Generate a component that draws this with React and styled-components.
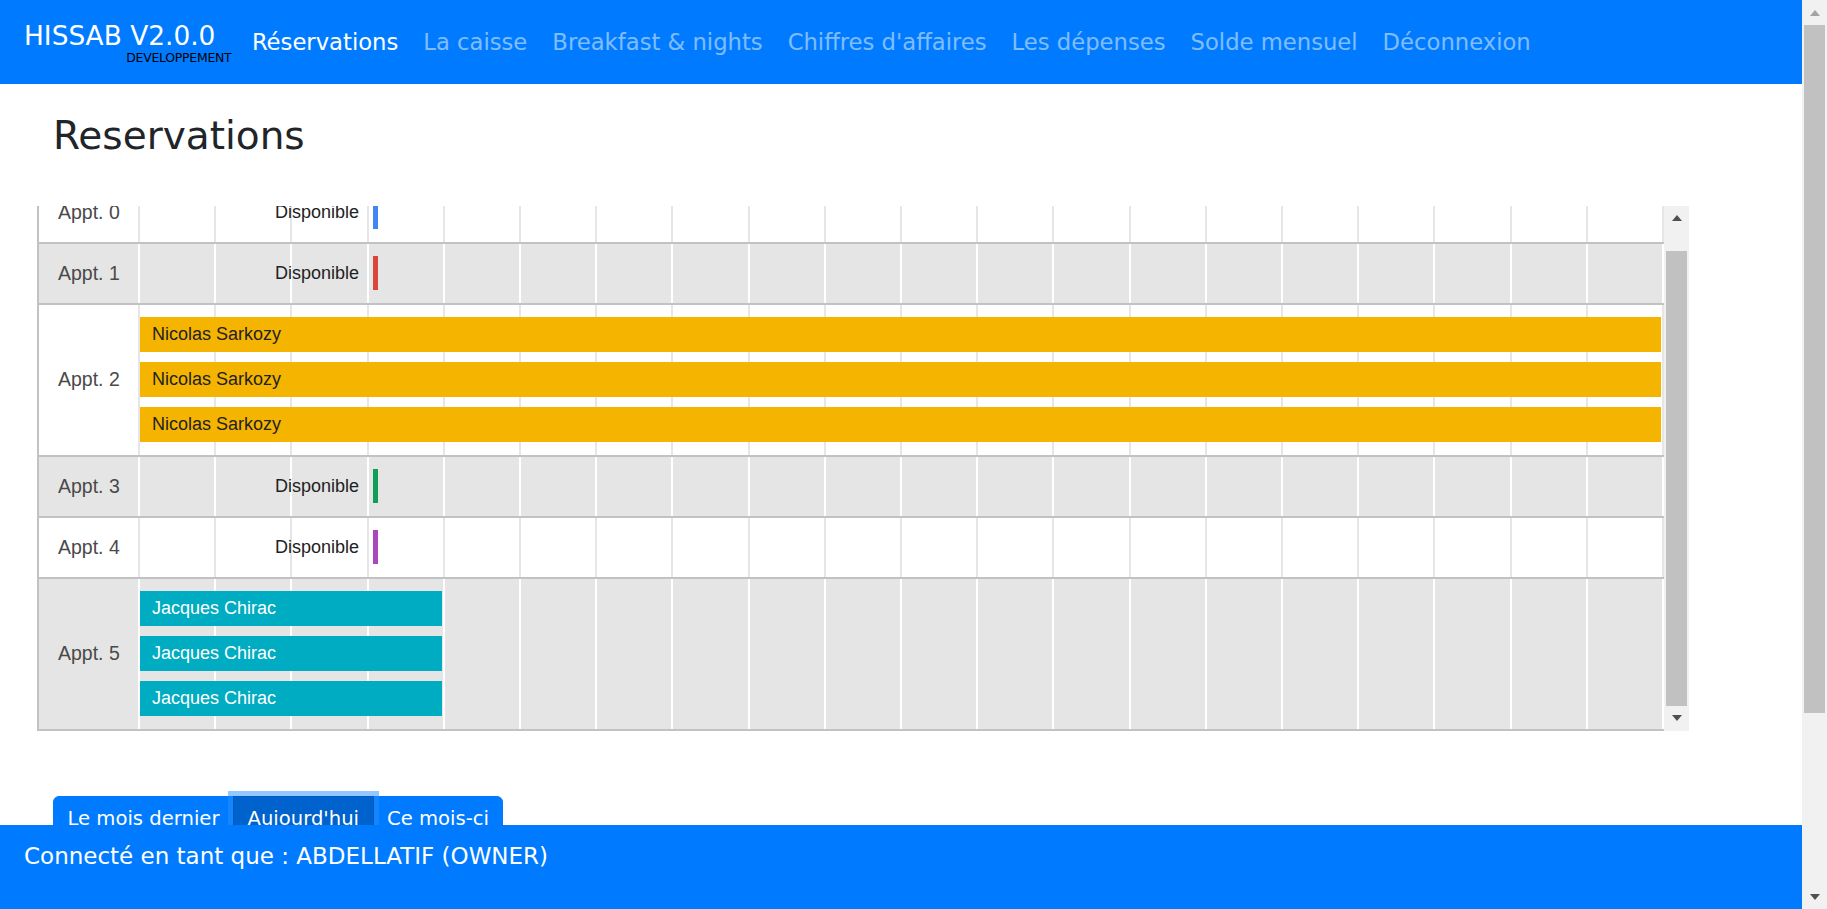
import React, { useEffect, useRef } from "react";
import styled, { createGlobalStyle } from "styled-components";

const COL = 76.2;
const CHART_HEIGHT = 525;
const ROW_HEIGHT = 61;
const STACK_HEIGHT = 152;
const PAGE_HEIGHT = 1135;

const GlobalStyle = createGlobalStyle`
  html, body {
    margin: 0;
    padding: 0;
    overflow: hidden;
  }
  body {
    font-family: "DejaVu Sans", "Open Sans", sans-serif;
    color: #212529;
    background: #ffffff;
  }
`;

/* ---------- scrollbars (drawn, the browser hides its own) ---------- */

const Rail = styled.div`
  width: 25px;
  flex: none;
  display: flex;
  flex-direction: column;
  background: #f1f1f1;
  height: ${(p) => p.$height};
`;

const RailButton = styled.div`
  height: 25px;
  flex: none;
  display: flex;
  align-items: center;
  justify-content: center;

  &::before {
    content: "";
    width: 0;
    height: 0;
    border-left: 5.5px solid transparent;
    border-right: 5.5px solid transparent;
    ${(p) =>
      p.$down
        ? `border-top: 6px solid ${p.$color};`
        : `border-bottom: 6px solid ${p.$color};`}
  }
`;

const RailTrack = styled.div`
  flex: 1;
  padding: 0 2px;
  overflow: hidden;
`;

const RailThumb = styled.div`
  background: #c1c1c1;
`;

function ScrollBar({ height, visible, content, offset, upColor, downColor }) {
  const track = (typeof height === "number" ? height : 909) - 50;
  const size = (track * visible) / content;
  const top = (track * offset) / content;
  return (
    <Rail $height={typeof height === "number" ? `${height}px` : height}>
      <RailButton $color={upColor} />
      <RailTrack>
        <RailThumb style={{ height: size, marginTop: top }} />
      </RailTrack>
      <RailButton $down $color={downColor} />
    </Rail>
  );
}

/* ---------- page frame ---------- */

const Screen = styled.div`
  display: flex;
  height: 100vh;
  overflow: hidden;
`;

const Viewport = styled.div`
  flex: 1;
  min-width: 0;
  display: flex;
  flex-direction: column;
`;

const Navbar = styled.nav`
  height: 84px;
  flex: none;
  background: #007bff;
  display: flex;
  align-items: center;
  padding: 0 24px;
`;

const Brand = styled.div`
  display: flex;
  flex-direction: column;
  align-items: flex-end;
  padding: 13px 0;
  margin-right: 24px;
  color: #ffffff;
`;

const BrandName = styled.span`
  font-size: 26.4px;
  line-height: 32px;
  white-space: nowrap;
`;

const BrandTag = styled.small`
  font-size: 12.5px;
  line-height: 14px;
  letter-spacing: -0.3px;
  color: #000000;
  margin: -1px -16px 0 0;
`;

const NavLinks = styled.div`
  display: flex;
  align-items: center;
`;

const NavLink = styled.a`
  font-size: 22.7px;
  line-height: 33px;
  padding: 0 12.5px;
  white-space: nowrap;
  text-decoration: none;
  color: ${(p) => (p.$active ? "#ffffff" : "rgba(255, 255, 255, 0.5)")};
`;

const Main = styled.main`
  flex: 1;
  min-height: 0;
  overflow: hidden;
  padding: 0 37px;
`;

const Title = styled.h1`
  margin: 29px 0 46px 16px;
  font-size: 39px;
  line-height: 1.2;
  font-weight: 400;
  color: #212529;
`;

/* ---------- timeline chart ---------- */

const ChartFrame = styled.div`
  display: flex;
  width: 1652px;
  height: ${CHART_HEIGHT}px;
  margin-top: 2px;
  font-family: "Liberation Sans", Arial, sans-serif;
`;

const ChartViewport = styled.div`
  width: 1627px;
  height: 100%;
  overflow: hidden;
`;

const ChartBody = styled.div`
  border-left: 2px solid #c2c2c2;
`;

const Row = styled.div`
  display: grid;
  grid-template-columns: 99px 1526px;
  border-bottom: 2px solid #c2c2c2;
  background: ${(p) => (p.$grey ? "#e5e5e5" : "#ffffff")};
`;

const RowLabel = styled.div`
  display: flex;
  align-items: center;
  padding-left: 19px;
  font-size: 19.5px;
  color: #4a4a4a;
  white-space: nowrap;
`;

const Timeline = styled.div`
  display: flex;
  flex-direction: ${(p) => (p.$stack ? "column" : "row")};
  align-items: ${(p) => (p.$stack ? "flex-start" : "center")};
  gap: 10px;
  height: ${(p) => (p.$stack ? STACK_HEIGHT - 2 : ROW_HEIGHT - 2)}px;
  padding: ${(p) => (p.$stack ? "12px 0 13px 2px" : "0 0 0 2px")};
  box-sizing: border-box;
  background-image: repeating-linear-gradient(
    to right,
    ${(p) => p.$line} 0,
    ${(p) => p.$line} 2px,
    transparent 2px,
    transparent ${COL}px
  );
`;

const Bar = styled.div`
  height: 35px;
  flex: none;
  display: flex;
  align-items: center;
  padding-left: 12px;
  box-sizing: border-box;
  font-size: 18px;
  white-space: nowrap;
  background: ${(p) => p.$bg};
  color: ${(p) => p.$fg};
`;

const DispoSlot = styled.div`
  width: 238px;
  display: flex;
  align-items: center;
  justify-content: flex-end;
`;

const DispoText = styled.span`
  font-size: 18px;
  color: #222222;
  margin-right: 14px;
`;

const Marker = styled.span`
  width: 5px;
  height: 34px;
  background: ${(p) => p.$color};
`;

/* ---------- buttons + footer ---------- */

const ButtonGroup = styled.div`
  display: inline-flex;
  margin: 65px 0 0 16px;
`;

const GroupButton = styled.button`
  position: relative;
  font-family: "DejaVu Sans", "Open Sans", sans-serif;
  font-size: 19.6px;
  line-height: 30px;
  padding: 7px 13.5px 9px;
  color: #ffffff;
  border: 1px solid ${(p) => (p.$active ? "#005cbf" : "#007bff")};
  background: ${(p) => (p.$active ? "#0062cc" : "#007bff")};
  box-shadow: ${(p) =>
    p.$active ? "0 0 0 5px rgba(38, 143, 255, 0.5)" : "none"};
  z-index: ${(p) => (p.$active ? 1 : 0)};
  border-radius: 0;

  & + & {
    margin-left: -1px;
  }
  &:first-child {
    border-radius: 6px 0 0 6px;
  }
  &:last-child {
    border-radius: 0 6px 6px 0;
  }
`;

const Footer = styled.footer`
  height: 84px;
  flex: none;
  box-sizing: border-box;
  padding: 16px 24px;
  background: #007bff;
  color: #ffffff;
  font-size: 23px;
  line-height: 30px;
`;

const navItems = [
  "Réservations",
  "La caisse",
  "Breakfast & nights",
  "Chiffres d'affaires",
  "Les dépenses",
  "Solde mensuel",
  "Déconnexion",
];

const nicolas = { name: "Nicolas Sarkozy", bg: "#f4b400", fg: "#222222", span: 20 };
const jacques = { name: "Jacques Chirac", bg: "#00acc1", fg: "#ffffff", span: 4 };

const rows = [
  { label: "Appt. 0", marker: "#4285f4" },
  { label: "Appt. 1", marker: "#db4437" },
  { label: "Appt. 2", bars: [nicolas, nicolas, nicolas] },
  { label: "Appt. 3", marker: "#0f9d58" },
  { label: "Appt. 4", marker: "#ab47bc" },
  { label: "Appt. 5", bars: [jacques, jacques, jacques] },
];

const contentHeight = rows.reduce(
  (sum, r) => sum + (r.bars ? STACK_HEIGHT : ROW_HEIGHT),
  0
);
const chartOffset = contentHeight - CHART_HEIGHT;

function ReservationChart() {
  const viewRef = useRef(null);

  useEffect(() => {
    if (viewRef.current) viewRef.current.scrollTop = chartOffset;
  }, []);

  return (
    <ChartFrame>
      <ChartViewport ref={viewRef}>
        <ChartBody>
          {rows.map((row, i) => {
            const grey = i % 2 === 1;
            return (
              <Row key={row.label} $grey={grey}>
                <RowLabel>{row.label}</RowLabel>
                <Timeline
                  $stack={!!row.bars}
                  $line={grey ? "#ffffff" : "#e6e6e6"}
                >
                  {row.bars ? (
                    row.bars.map((bar, j) => (
                      <Bar
                        key={j}
                        $bg={bar.bg}
                        $fg={bar.fg}
                        style={{ width: bar.span * COL - 3 }}
                      >
                        {bar.name}
                      </Bar>
                    ))
                  ) : (
                    <DispoSlot>
                      <DispoText>Disponible</DispoText>
                      <Marker $color={row.marker} />
                    </DispoSlot>
                  )}
                </Timeline>
              </Row>
            );
          })}
        </ChartBody>
      </ChartViewport>
      <ScrollBar
        height={CHART_HEIGHT}
        visible={CHART_HEIGHT}
        content={contentHeight}
        offset={chartOffset}
        upColor="#505050"
        downColor="#505050"
      />
    </ChartFrame>
  );
}

export default function App() {
  return (
    <>
      <GlobalStyle />
      <Screen>
        <Viewport>
          <Navbar>
            <Brand>
              <BrandName>HISSAB V2.0.0</BrandName>
              <BrandTag>DEVELOPPEMENT</BrandTag>
            </Brand>
            <NavLinks>
              {navItems.map((item, i) => (
                <NavLink key={item} $active={i === 0}>
                  {item}
                </NavLink>
              ))}
            </NavLinks>
          </Navbar>
          <Main>
            <Title>Reservations</Title>
            <ReservationChart />
            <ButtonGroup>
              <GroupButton>Le mois dernier</GroupButton>
              <GroupButton $active>Aujourd'hui</GroupButton>
              <GroupButton>Ce mois-ci</GroupButton>
            </ButtonGroup>
          </Main>
          <Footer>Connecté en tant que : ABDELLATIF (OWNER)</Footer>
        </Viewport>
        <ScrollBar
          height="100vh"
          visible={909}
          content={PAGE_HEIGHT}
          offset={0}
          upColor="#a3a3a3"
          downColor="#505050"
        />
      </Screen>
    </>
  );
}
